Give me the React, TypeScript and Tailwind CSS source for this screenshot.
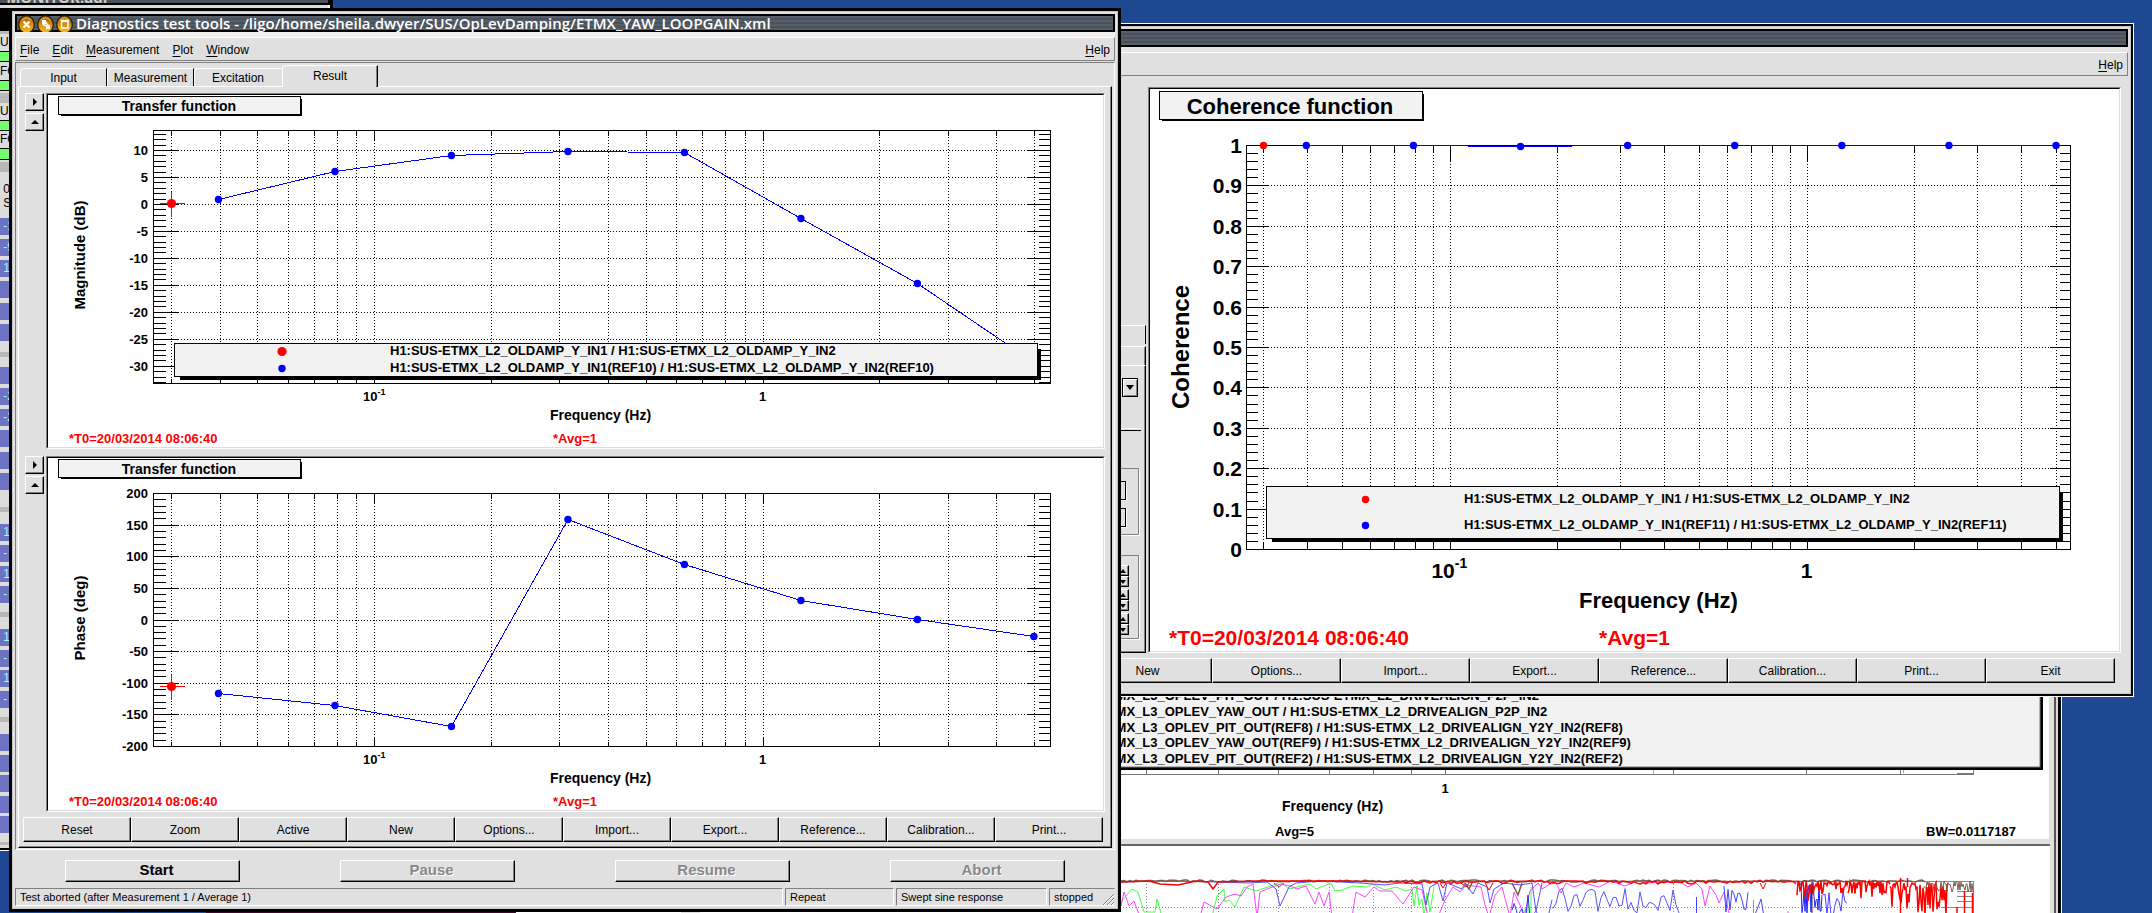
import type { ReactNode } from "react";

const DECADES = [-2, -1, 0];
const TONE_PAIR = "H1:SUS-ETMX_L2_OLDAMP_Y_IN1";
const TONE_PAIR_B = "H1:SUS-ETMX_L2_OLDAMP_Y_IN2";
/** Swept sine frequencies, log spaced up to 5 Hz */
const FREQS = [7, 6, 5, 4, 3, 2, 1, 0].map((k) => 5 * 10 ** (-0.3 * k));

type ChartSpec = {
  label: string;
  width: number;
  height: number;
  frame: [number, number, number, number];
  /** x of 0.1 Hz and width of one decade */
  x01: number;
  decade: number;
  yMax: number;
  perUnit: number;
  yTop: number;
  majors: number[];
  minors: number[];
  xTick: number;
  xTickMajor: number;
  yTick: number;
  yTickMajor: number;
  title: string;
  titleBox: [number, number, number, number];
  titleAt: [number, number];
  titleSize: number;
  tickSize: number;
  supSize: number;
  labelDy: number;
  labelX: number;
  decadeY: number;
  supDy: number;
  yTitle: string;
  yTitleAt: [number, number];
  yTitleSize: number;
  xTitleAt: [number, number];
  xTitleSize: number;
  footY: number;
  footX: [number, number];
  footSize: number;
  points: number[];
  red: [number, number];
  redRadius: number;
  redCross: boolean;
  legend?: {
    box: [number, number, number, number];
    shadow: [number, number, number, number];
    markerX: number;
    markerY: [number, number];
    textX: number;
    textY: [number, number];
    ref: string;
    redRadius: number;
  };
};

function range(from: number, to: number, step: number) {
  const n = Math.round((to - from) / step);
  return Array.from({ length: n + 1 }, (_, i) => from + i * step);
}

function Chart({ c }: { c: ChartSpec }) {
  const [l, t, r, b] = c.frame;
  const px = (f: number) => c.x01 + (Math.log10(f) + 1) * c.decade;
  const py = (v: number) => Math.round(c.yTop + (c.yMax - v) * c.perUnit) + 0.5;
  const xs = DECADES.flatMap((d) => range(1, 9, 1).map((m) => ({ f: m * 10 ** d, major: m === 1 })))
    .map((k) => ({ ...k, x: Math.round(px(k.f)) + 0.5 }))
    .filter((k) => k.x > l && k.x < r);
  const lg = c.legend;
  return (
    <svg
      role="img"
      aria-label={c.label}
      viewBox={`0 0 ${c.width} ${c.height}`}
      className="block h-full w-full bg-white font-['Liberation_Sans',Arial,sans-serif] font-bold"
    >
      <g shapeRendering="crispEdges" stroke="#000" fill="none">
        {xs.map((k) => (
          <g key={k.x}>
            <line x1={k.x} x2={k.x} y1={Math.ceil(t)} y2={Math.floor(b)} strokeDasharray="1 2" />
            <line x1={k.x} x2={k.x} y1={t} y2={t + (k.major ? c.xTickMajor : c.xTick)} />
            <line x1={k.x} x2={k.x} y1={b} y2={b - (k.major ? c.xTickMajor : c.xTick)} />
          </g>
        ))}
        {c.majors.map((v) => (
          <g key={v}>
            <line x1={Math.ceil(l)} x2={Math.floor(r)} y1={py(v)} y2={py(v)} strokeDasharray="1 2" />
            <line x1={l} x2={l + c.yTickMajor} y1={py(v)} y2={py(v)} />
            <line x1={r} x2={r - c.yTickMajor} y1={py(v)} y2={py(v)} />
          </g>
        ))}
        {c.minors.map((v) => (
          <g key={v}>
            <line x1={l} x2={l + c.yTick} y1={py(v)} y2={py(v)} />
            <line x1={r} x2={r - c.yTick} y1={py(v)} y2={py(v)} />
          </g>
        ))}
        <rect x={l} y={t} width={r - l} height={b - t} />
      </g>
      <g fontSize={c.tickSize}>
        {c.majors.map((v) => (
          <text key={v} x={c.labelX} y={py(v) + c.labelDy} textAnchor="end">
            {Number(v.toFixed(1))}
          </text>
        ))}
        <text x={px(0.1) + c.tickSize * 0.25} y={c.decadeY} textAnchor="end">
          10
        </text>
        <text x={px(0.1) + c.tickSize * 0.25} y={c.decadeY - c.supDy} fontSize={c.supSize}>
          -1
        </text>
        <text x={px(1)} y={c.decadeY} textAnchor="middle">
          1
        </text>
      </g>
      <g shapeRendering="crispEdges">
        <polyline
          points={FREQS.map((f, i) => `${px(f)},${c.points[i]}`).join(" ")}
          fill="none"
          stroke="#00f"
        />
      </g>
      {FREQS.map((f, i) => (
        <circle key={f} cx={px(f)} cy={c.points[i]} r="3.7" fill="#00f" />
      ))}
      <circle cx={c.red[0]} cy={c.red[1]} r={c.redRadius} fill="#f00" />
      {c.redCross && (
        <path
          d={`M${c.red[0] - 12} ${c.red[1]}h25M${c.red[0]} ${c.red[1] - 12}v25`}
          stroke="#f00"
          shapeRendering="crispEdges"
        />
      )}
      {lg && (
        <g>
          <rect x={lg.shadow[0]} y={lg.shadow[1]} width={lg.shadow[2] - lg.shadow[0]} height={lg.shadow[3] - lg.shadow[1]} />
          <rect
            x={lg.box[0]}
            y={lg.box[1]}
            width={lg.box[2] - lg.box[0]}
            height={lg.box[3] - lg.box[1]}
            fill="#f2f2f2"
            stroke="#000"
          />
          <circle cx={lg.markerX} cy={lg.markerY[0]} r={lg.redRadius} fill="#f00" />
          <circle cx={lg.markerX} cy={lg.markerY[1]} r="3.7" fill="#00f" />
          <text x={lg.textX} y={lg.textY[0]} fontSize="13">
            {`${TONE_PAIR} / ${TONE_PAIR_B}`}
          </text>
          <text x={lg.textX} y={lg.textY[1]} fontSize="13">
            {`${TONE_PAIR}(${lg.ref}) / ${TONE_PAIR_B}(${lg.ref})`}
          </text>
        </g>
      )}
      <g shapeRendering="crispEdges">
        <rect
          x={c.titleBox[0] + 3}
          y={c.titleBox[1] + 3}
          width={c.titleBox[2] - c.titleBox[0] - 1}
          height={c.titleBox[3] - c.titleBox[1] - 1}
        />
        <rect
          x={c.titleBox[0] + 0.5}
          y={c.titleBox[1] + 0.5}
          width={c.titleBox[2] - c.titleBox[0]}
          height={c.titleBox[3] - c.titleBox[1]}
          fill="#f2f2f2"
          stroke="#000"
        />
      </g>
      <text x={c.titleAt[0]} y={c.titleAt[1]} fontSize={c.titleSize} textAnchor="middle">
        {c.title}
      </text>
      <text
        transform={`translate(${c.yTitleAt[0]} ${c.yTitleAt[1]}) rotate(-90)`}
        fontSize={c.yTitleSize}
        textAnchor="middle"
      >
        {c.yTitle}
      </text>
      <text x={c.xTitleAt[0]} y={c.xTitleAt[1]} fontSize={c.xTitleSize}>
        Frequency (Hz)
      </text>
      <g fill="#f00" fontSize={c.footSize}>
        <text x={c.footX[0]} y={c.footY}>
          *T0=20/03/2014 08:06:40
        </text>
        <text x={c.footX[1]} y={c.footY}>
          *Avg=1
        </text>
      </g>
    </svg>
  );
}

const small = {
  width: 1055,
  height: 352,
  frame: [105.5, 35.5, 1002.5, 288.5] as [number, number, number, number],
  x01: 326.2,
  decade: 388.3,
  xTick: 5,
  xTickMajor: 10,
  yTick: 12,
  yTickMajor: 24,
  title: "Transfer function",
  titleBox: [10, 1, 252, 19] as [number, number, number, number],
  titleAt: [131, 16] as [number, number],
  titleSize: 14,
  tickSize: 13,
  supSize: 9,
  labelDy: 4,
  labelX: 100,
  decadeY: 306,
  supDy: 6,
  yTitleAt: [37, 160] as [number, number],
  yTitleSize: 15,
  xTitleAt: [502, 325] as [number, number],
  xTitleSize: 14,
  footY: 348,
  footX: [21, 505] as [number, number],
  footSize: 13,
  redRadius: 4.6,
  redCross: true,
};

const magnitude: ChartSpec = {
  ...small,
  label: "Transfer function magnitude",
  yMax: 10,
  yTop: 55,
  perUnit: 5.393,
  majors: range(-30, 10, 5),
  minors: range(-33, 13, 1),
  yTitle: "Magnitude (dB)",
  points: [104.5, 76.5, 60.5, 56.5, 57.5, 123.5, 188.5, 267.5],
  red: [123.5, 108.5],
  legend: {
    box: [126.5, 248.5, 989.5, 281.5],
    shadow: [132, 254, 993, 285],
    markerX: 234,
    markerY: [256.5, 273.5],
    textX: 342,
    textY: [260, 277],
    ref: "REF10",
    redRadius: 4.6,
  },
};

const phase: ChartSpec = {
  ...small,
  label: "Transfer function phase",
  yMax: 200,
  yTop: 35,
  perUnit: 0.6325,
  majors: range(-200, 200, 50),
  minors: range(-190, 190, 10),
  yTitle: "Phase (deg)",
  points: [235.5, 247.5, 268.5, 61.5, 106.5, 142.5, 161.5, 178.5],
  red: [123.5, 228.5],
};

const coherence: ChartSpec = {
  label: "Coherence function",
  width: 969,
  height: 562,
  frame: [96.5, 56.5, 920.5, 460.5],
  x01: 299.5,
  decade: 357,
  yMax: 1,
  yTop: 56,
  perUnit: 404,
  majors: range(0, 1, 0.1),
  minors: range(0.02, 0.98, 0.02),
  xTick: 7,
  xTickMajor: 15,
  yTick: 11,
  yTickMajor: 21,
  title: "Coherence function",
  titleBox: [9, 2, 272, 30],
  titleAt: [140, 25],
  titleSize: 22,
  tickSize: 21,
  supSize: 14,
  labelDy: 7,
  labelX: 92,
  decadeY: 489,
  supDy: 10,
  yTitle: "Coherence",
  yTitleAt: [39, 258],
  yTitleSize: 24,
  xTitleAt: [429, 519],
  xTitleSize: 22,
  footY: 556,
  footX: [19, 449],
  footSize: 21,
  points: [56.5, 56.5, 57.5, 56.5, 56.5, 56.5, 56.5, 56.5],
  red: [113.5, 56.5],
  redRadius: 3.7,
  redCross: false,
  legend: {
    box: [116.5, 397.5, 909.5, 449.5],
    shadow: [122, 403, 913, 453],
    markerX: 215.5,
    markerY: [410.5, 436.5],
    textX: 314,
    textY: [414, 440],
    ref: "REF11",
    redRadius: 3.7,
  },
};

/* ---------- window chrome ---------- */

function TitleBar({ children }: { children?: ReactNode }) {
  return (
    <div className="flex h-[18px] shrink-0 items-center border-2 border-black bg-[repeating-linear-gradient(#565f69_0_2px,#49515b_2px_4px)]">
      {children}
    </div>
  );
}

function OrbButton({ label, children }: { label: string; children: ReactNode }) {
  return (
    <button aria-label={label} className="h-[19px] w-[17px]">
      <svg viewBox="0 0 17 19" className="block h-full w-full">
        <defs>
          <linearGradient id={`orb-${label}`} x1="0" y1="0" x2="0" y2="1">
            <stop offset="0" stopColor="#9a5a00" />
            <stop offset=".5" stopColor="#d98e08" />
            <stop offset="1" stopColor="#ffc020" />
          </linearGradient>
        </defs>
        <ellipse cx="8.5" cy="9.5" rx="7.8" ry="8.8" fill={`url(#orb-${label})`} stroke="#2a1c00" strokeWidth="1.2" />
        <path d="M3.5 5.5Q8.5 0 13.5 5.5" fill="none" stroke="#e8b860" />
        {children}
      </svg>
    </button>
  );
}

function MenuItem({ text }: { text: string }) {
  return (
    <button className="text-[12px] leading-4">
      <span className="underline underline-offset-2">{text[0]}</span>
      {text.slice(1)}
    </button>
  );
}

function MenuBar({ items }: { items: string[] }) {
  return (
    <nav className="flex h-6 shrink-0 items-center justify-between border border-t-white border-r-[#808080] border-b-[#808080] border-l-white px-1 pt-[2px]">
      <div className="flex gap-[13px]">
        {items.map((i) => (
          <MenuItem key={i} text={i} />
        ))}
      </div>
      <MenuItem text="Help" />
    </nav>
  );
}

function PushButton({ children, strong, disabled }: { children: ReactNode; strong?: boolean; disabled?: boolean }) {
  return (
    <button
      disabled={disabled}
      className={`flex min-w-0 flex-1 items-center justify-center border border-t-white border-r-black border-b-black border-l-white bg-[#e0e0e0] shadow-[inset_-1px_-1px_0_#808080] ${
        strong ? "h-[22px] pb-[2px] pl-2 text-[15px] leading-4 font-bold" : "h-[25px] text-[12px] leading-4"
      } ${disabled ? "text-[#888] [text-shadow:1px_1px_0_#fff]" : "text-black"}`}
    >
      {children}
    </button>
  );
}

function ArrowButton({ dir }: { dir: "right" | "up" }) {
  return (
    <button
      aria-label={dir === "right" ? "Expand options" : "Collapse options"}
      className="flex h-[18px] w-[19px] items-center justify-center border border-t-white border-r-black border-b-black border-l-white shadow-[inset_-1px_-1px_0_#808080]"
    >
      <svg viewBox="0 0 8 8" className="h-2 w-2">
        <path d={dir === "right" ? "M2 0v8l4-4z" : "M0 6h8L4 2z"} />
      </svg>
    </button>
  );
}

function Canvas({ children }: { children: ReactNode }) {
  return (
    <div className="min-h-0 min-w-0 flex-1 border border-t-[#808080] border-r-white border-b-white border-l-[#808080]">
      <div className="h-full overflow-hidden border border-t-black border-r-[#dcdcdc] border-b-[#dcdcdc] border-l-black bg-white">
        {children}
      </div>
    </div>
  );
}

function ChartRow({ c }: { c: ChartSpec }) {
  return (
    <div className="flex min-h-0 flex-1 gap-[2px] px-[6px]">
      <div className="flex flex-col gap-[2px]">
        <ArrowButton dir="right" />
        <ArrowButton dir="up" />
      </div>
      <Canvas>
        <Chart c={c} />
      </Canvas>
    </div>
  );
}

const TABS = [
  { name: "Input", cls: "h-[18px] w-[87px] border-r-black" },
  { name: "Measurement", cls: "h-[18px] w-[87px] border-r-black" },
  { name: "Excitation", cls: "h-[18px] w-[88px] border-r-transparent" },
];
const PLOT_ACTIONS = ["Reset", "Zoom", "Active", "New", "Options...", "Import...", "Export...", "Reference...", "Calibration...", "Print..."];

function MainWindow() {
  return (
    <section className="absolute top-2 left-[9px] flex h-[904px] w-[1112px] flex-col border-[3px] border-black bg-[#e0e0e0] p-[3px] shadow-[inset_0_0_0_1px_#c8c8c8]">
      <TitleBar>
        <div className="flex gap-[2px] pt-[3px] pl-px">
          <OrbButton label="Close">
            <path d="M5.5 6.5l6 6M11.500 6.5l-6 6" stroke="#fff" strokeWidth="2.4" />
          </OrbButton>
          <OrbButton label="Minimize">
            <path d="M5 5h4v4H5zM9 10h4v4H9z" fill="#fff" />
            <path d="M5.5 9.5l6 2M8.5 7l3 4" stroke="#fff" strokeWidth="1.6" />
          </OrbButton>
          <OrbButton label="Maximize">
            <path d="M5.5 6h6.500v7h-6.500z" fill="none" stroke="#fff" strokeWidth="1.5" />
            <path d="M5 6h7.500" stroke="#fff" strokeWidth="2.5" />
          </OrbButton>
        </div>
        <h1 className="pl-[3px] font-['Open_Sans','Noto_Sans',sans-serif] text-[15px] leading-4 font-semibold whitespace-nowrap text-white">
          Diagnostics test tools - /ligo/home/sheila.dwyer/SUS/OpLevDamping/ETMX_YAW_LOOPGAIN.xml
        </h1>
      </TitleBar>
      <div className="h-[5px] shrink-0 bg-[#f0efee]" />
      <MenuBar items={["File", "Edit", "Measurement", "Plot", "Window"]} />
      <div className="mt-px flex min-h-0 flex-1 flex-col border border-t-[#808080] border-r-white border-b-white border-l-[#808080] px-[2px] pt-[2px] pb-px">
        <div className="flex shrink-0 items-end pl-[2px] text-[12px] leading-4" role="tablist">
          {TABS.map((t) => (
            <button key={t.name} role="tab" aria-selected="false" className={`rounded-tl-sm border-t border-r border-l border-t-white border-l-white ${t.cls}`}>
              {t.name}
            </button>
          ))}
          <button role="tab" aria-selected="true" className="z-10 -mb-px h-[22px] w-24 rounded-tl-sm border-t border-r border-l border-t-white border-r-black border-l-white bg-[#e0e0e0] pb-[2px] shadow-[inset_-1px_0_0_#808080]">
            Result
          </button>
        </div>
        <div className="flex min-h-0 flex-1 flex-col border border-t-white border-r-black border-b-black border-l-white pt-[6px] pb-[5px] shadow-[inset_-1px_-1px_0_#808080]">
          <div className="flex min-h-0 flex-1 flex-col gap-[7px]">
            <ChartRow c={magnitude} />
            <ChartRow c={phase} />
          </div>
          <div className="mt-[5px] flex pr-2 pl-1">
            {PLOT_ACTIONS.map((a) => (
              <PushButton key={a}>{a}</PushButton>
            ))}
          </div>
        </div>
      </div>
      <div className="grid shrink-0 grid-cols-4 pt-[10px] pb-[6px]">
        {["Start", "Pause", "Resume", "Abort"].map((a) => (
          <div key={a} className="flex px-[50px]">
            <PushButton strong disabled={a !== "Start"}>
              {a}
            </PushButton>
          </div>
        ))}
      </div>
      <footer className="flex h-[18px] shrink-0 gap-[2px] text-[11px] leading-4">
        <span className="flex-1 border border-t-[#808080] border-r-white border-b-white border-l-[#808080] pl-1">
          Test aborted (after Measurement 1 / Average 1)
        </span>
        <span className="w-[109px] border border-t-[#808080] border-r-white border-b-white border-l-[#808080] pl-1">Repeat</span>
        <span className="w-[151px] border border-t-[#808080] border-r-white border-b-white border-l-[#808080] pl-1">Swept sine response</span>
        <span className="flex w-[66px] items-end justify-between border border-t-[#808080] border-r-transparent border-b-white border-l-[#808080] pl-1">
          stopped
          <svg viewBox="0 0 12 12" className="h-3 w-3" stroke="#808080">
            <path d="M1 12L12 1M5 12l7-7M9 12l3-3" />
            <path d="M2 12L12 2M6 12l6-6M10 12l2-2" stroke="#fff" />
          </svg>
        </span>
      </footer>
    </section>
  );
}

/* ---------- coherence window ---------- */

function SpinPair({ n }: { n: number }) {
  return (
    <div className="flex w-6 flex-col">
      <button aria-label={`Increase ${n}`} className="flex h-[11px] items-center justify-end border border-l-0 border-t-white border-r-black border-b-black pr-[2px] shadow-[inset_-1px_-1px_0_#808080]">
        <svg viewBox="0 0 6 4" className="h-1 w-[6px]">
          <path d="M0 4h6L3 0z" />
        </svg>
      </button>
      <button aria-label={`Decrease ${n}`} className="flex h-[11px] items-center justify-end border border-l-0 border-t-white border-r-black border-b-black pr-[2px] shadow-[inset_-1px_-1px_0_#808080]">
        <svg viewBox="0 0 6 4" className="h-1 w-[6px]">
          <path d="M0 0h6L3 4z" />
        </svg>
      </button>
    </div>
  );
}

function OptionsPane() {
  return (
    <div className="flex w-[459px] shrink-0 flex-col pt-[238px]">
      <div className="h-[19px] border-t border-r border-t-white border-r-black" />
      <div className="mt-[2px] h-[19px] border-t border-r border-t-white border-r-black shadow-[inset_-1px_0_0_#808080]" />
      <div className="flex min-h-0 flex-1 flex-col items-end border-t border-r border-b border-t-white border-r-black border-b-black pr-1 shadow-[inset_-1px_-1px_0_#808080]">
        <button aria-label="Open list" className="mt-3 mr-[3px] flex h-[19px] w-4 items-center justify-center border border-black shadow-[inset_1px_1px_0_#fff,inset_-1px_-1px_0_#808080]">
          <svg viewBox="0 0 8 5" className="h-[5px] w-2">
            <path d="M0 0h8L4 5z" />
          </svg>
        </button>
        <hr className="mt-[31px] h-[3px] w-full border-t border-b border-t-white border-b-black" />
        <div className="mt-[37px] mr-[2px] flex h-[67px] w-24 flex-col gap-2 border border-[#808080] py-3 pr-3 shadow-[1px_1px_0_#fff]">
          <input aria-label="Range minimum" className="h-[19px] w-full border border-black bg-[#e0e0e0] shadow-[1px_1px_0_#fff]" />
          <input aria-label="Range maximum" className="h-[19px] w-full border border-black bg-[#e0e0e0] shadow-[1px_1px_0_#fff]" />
        </div>
        <div className="mt-5 mr-[2px] flex h-[84px] w-24 flex-col items-end gap-[2px] border border-[#808080] pt-[9px] pr-[9px] shadow-[1px_1px_0_#fff]">
          {[1, 2, 3].map((n) => (
            <SpinPair key={n} n={n} />
          ))}
        </div>
      </div>
    </div>
  );
}

function CoherenceWindow() {
  return (
    <section className="absolute top-[23px] left-[681px] h-[674px] w-[1453px] border border-white bg-black p-[2px]">
      <div className="flex h-full flex-col bg-[#e0e0e0] p-[3px] shadow-[inset_0_0_0_1px_#c8c8c8]">
        <TitleBar />
        <div className="h-[5px] shrink-0 bg-[#e6e4e4]" />
        <MenuBar items={[]} />
        <div className="flex min-h-0 flex-1 gap-[2px] pt-[11px] pr-[7px]">
          <OptionsPane />
          <Canvas>
            <Chart c={coherence} />
          </Canvas>
        </div>
        <div className="mt-[5px] mb-2 flex pr-[13px] pl-[9px]">
          {[...PLOT_ACTIONS, "Exit"].map((a) => (
            <PushButton key={a}>{a}</PushButton>
          ))}
        </div>
      </div>
    </section>
  );
}

/* ---------- background spectrum window ---------- */

const LEGEND_ROWS = [
  "H1:SUS-ETMX_L3_OPLEV_PIT_OUT / H1:SUS-ETMX_L2_DRIVEALIGN_P2P_IN2",
  "H1:SUS-ETMX_L3_OPLEV_YAW_OUT / H1:SUS-ETMX_L2_DRIVEALIGN_P2P_IN2",
  "H1:SUS-ETMX_L3_OPLEV_PIT_OUT(REF8) / H1:SUS-ETMX_L2_DRIVEALIGN_Y2Y_IN2(REF8)",
  "H1:SUS-ETMX_L3_OPLEV_YAW_OUT(REF9) / H1:SUS-ETMX_L2_DRIVEALIGN_Y2Y_IN2(REF9)",
  "H1:SUS-ETMX_L3_OPLEV_PIT_OUT(REF2) / H1:SUS-ETMX_L2_DRIVEALIGN_Y2Y_IN2(REF2)",
];
const LEGEND_Y = [100, 116, 132, 147, 163];
const GRID_X = [446.5, 518.5, 578.5, 629.5, 673.5, 711.5, 745.5, 973.5, 1106.5, 1200.5];

/** Random trace hanging down from the top of the plot; depth grows with amp, spiky with high power. */
function trace(seed: number, from: number, to: number, step: number, amp: (x: number) => number, power: number, top = 36) {
  let s = seed;
  const next = () => {
    s = (s * 1103515245 + 12345) % 2147483648;
    return s / 2147483648;
  };
  return range(from, to, step)
    .map((x) => `${x},${(top + next() ** power * amp(x)).toFixed(1)}`)
    .join(" ");
}

const GREEN = "421,57 432,44 438,47 444,67 455,67 457,54 462,72 512,72 517,51 524,44 525,57 529,55 535,62 544,42 556,46 571,41 580,37 589,44 610,39 616,44 631,38 635,46 642,45 653,41 667,42 672,39 685,45 696,42 706,46 712,44 714,61 717,41 719,60 722,54 724,72 727,48 730,67 734,42";
const MAGENTA_A = "421,61 424,47 429,61 434,56 440,72 500,72 504,57 517,64 526,52 535,49 541,51 547,42 553,39 557,72 560,47 567,44 581,39 590,41 597,44 606,41 615,59 619,47 624,61 629,47 632,72 652,72 656,47 665,52 674,42 680,46 692,46 703,59 714,42 722,45 728,72";
const MAGENTA_B = "738,72 745,55 753,42 760,47 766,40 781,42 785,60 789,72 795,50 802,42 810,72 814,47 820,60 824,72 830,46 838,38 842,44 850,39 856,38 861,48 866,38 874,42 884,38 899,42 911,36 925,41 937,36 950,38 960,37 980,37 988,42 996,38 1002,44 1005,61 1010,41 1016,50 1019,58 1024,47 1030,72";
const BLUE = "421,37 460,36 520,37 548,38 567,37 576,44 580,61 589,42 596,38 620,36 660,38 685,40 700,38 722,39 726,60 730,42 738,38 743,56 747,38 762,44 765,38 773,49 778,38 787,42 790,58 794,44 804,38 820,40 832,38 836,66 842,38";

function SpectrumWindow() {
  return (
    <section className="absolute top-[600px] left-[681px] h-[313px] w-[1381px] overflow-hidden border-r border-white">
      <div className="h-full border-r-[3px] border-black">
        <div className="h-full border-r-2 border-[#d8d8d8]">
          <div className="flex h-full flex-col border-r-2 border-[#555] bg-[#e0e0e0] pl-[19px] pr-1">
            <svg viewBox="0 0 1349 239" className="block h-[239px] w-[1349px] bg-white font-['Liberation_Sans',Arial,sans-serif] font-bold">
              <rect x="0" y="2" width="1343" height="168" />
              <rect x="0" y="0" width="1340" height="167" fill="#f2f2f2" stroke="#777" />
              {LEGEND_ROWS.map((row, i) => (
                <text key={row} x="347" y={LEGEND_Y[i]} fontSize="13">
                  {row}
                </text>
              ))}
              <g shapeRendering="crispEdges" stroke="#777">
                <path d="M0 174.500H1273.500V170M1257 173.500h16" fill="none" />
                {GRID_X.map((x) => (
                  <line key={x} x1={x} x2={x} y1="170" y2="174" />
                ))}
                <line x1="953.5" x2="953.5" y1="170" y2="174" stroke="#3f3" />
                <line x1="1203.500" x2="1203.500" y1="170" y2="173" stroke="#f5f" />
              </g>
              <text x="745" y="193" fontSize="13" textAnchor="middle">
                1
              </text>
              <text x="582" y="211" fontSize="14">
                Frequency (Hz)
              </text>
              <text x="575" y="236" fontSize="13">
                Avg=5
              </text>
              <text x="1226" y="236" fontSize="13">
                BW=0.0117187
              </text>
            </svg>
            <div className="mt-[5px] flex-1 overflow-hidden border-t-2 border-[#666] bg-white">
              <svg viewBox="0 1 1349 67" className="block h-[67px] w-[1349px]" fill="none">
                <g shapeRendering="crispEdges" stroke="#888">
                  <path d="M0 36.500H1273.500V72" />
                  <path d="M0 62.500H1273" strokeDasharray="1 2" />
                  {GRID_X.map((x) => (
                    <line key={x} x1={x} x2={x} y1="36" y2="72" strokeDasharray="1 2" />
                  ))}
                  <path d="M1257 46.500h16M1257 51.500h16M1257 56.500h16M1241 62.500h32" />
                </g>
                <polyline points={GREEN} stroke="#4f4" />
                <path d="M825 72V62M828 72V50M831 42V72" stroke="#4f4" />
                <polyline points={MAGENTA_A} stroke="#f4f" />
                <polyline points={MAGENTA_B} stroke="#f4f" />
                <path d="M1053.500 55V72M1088 66v6" stroke="#f4f" />
                <polyline points={BLUE} stroke="#55f" />
                <polyline points={trace(7, 812, 830, 2, () => 30, 0.5, 42)} stroke="#33f" />
                <polyline points={trace(19, 832, 852, 4, () => 22, 1, 54)} stroke="#55f" />
                <polyline points={trace(23, 853, 978, 3, () => 26, 1, 42)} stroke="#55f" />
                <path d="M996.500 52V72" stroke="#44f" />
                <polyline points={trace(41, 1024, 1048, 2, () => 28, 1, 39)} stroke="#44f" />
                <polyline points={trace(43, 1100, 1122, 1, () => 32, 1, 37)} stroke="#22f" />
                <polyline points={trace(47, 1123, 1146, 2, () => 26, 1, 46)} stroke="#44f" />
                <path d="M1054 72l4-10 3-8 3 18" stroke="#44f" />
                <polyline points={trace(5, 421, 1224, 3, () => 2, 1, 35)} stroke="#7a6050" strokeWidth="1.500" />
                <path d="M765 38l4 6 3-6M812 38l6 12 4-12" stroke="#7a6050" strokeWidth="1.500" />
                <path d="M574 38l5 4 5-4" stroke="#7a6050" />
                <polyline points="421,37 449,36 460,39 478,40 496,36 508,37 513,44 518,37 560,36 640,36 700,37" stroke="#f00" strokeWidth="1.500" />
                <polyline points={trace(11, 700, 1097, 3, () => 3, 2, 36)} stroke="#f00" strokeWidth="1.500" />
                <path d="M740 38l3 5 3-5M761 38l5 4 3-4M785 38l4 7 4-7M1060 38l3 6 3-6" stroke="#f00" />
                <polyline points={trace(97, 1097, 1148, 1, (x) => (x < 1110 ? 20 : 14), 2)} stroke="#f00" strokeWidth="1.500" />
                <polyline points={trace(31, 1148, 1190, 1, (x) => 14 + (x - 1148) / 3, 2)} stroke="#f00" strokeWidth="1.500" />
                <polyline points={trace(61, 1190, 1248, 1, (x) => 24 + (x - 1190) / 3, 1.6, 37)} stroke="#f00" strokeWidth="1.500" />
                <path d="M1200.500 33V72M1207.500 33V42M1257 72V62M1264.500 46V72M1272.500 48V72" stroke="#f00" strokeWidth="1.500" />
                <polyline points={trace(71, 1224, 1273, 1, () => 11, 1)} stroke="#7a6050" />
                <path d="M1112 40V72" stroke="#503030" />
              </svg>
            </div>
          </div>
        </div>
      </div>
    </section>
  );
}

/* ---------- sliver of the monitor screen at the left edge ---------- */

const G = "bg-[#dcdcdc] text-black";
const D = "bg-[#b8b8b8]";
const K = "bg-black";
const L = "bg-[#73ff6b]";
const V = "bg-[#6b73c2] text-[#9ff]";
const STRIP: [number, string, string?][] = [
  [23, K], [3, D], [17, G, "UT"], [1, K], [9, L], [1, K], [18, G, "FO"], [1, K], [9, L], [1, K], [2, G], [10, D], [17, G, "UT"],
  [1, K], [9, L], [1, K], [17, G, "FO"], [1, K], [10, L], [1, K], [2, G], [10, D], [10, G], [14, G, " 0"], [14, G, " S"], [8, G],
  [17, V, " -1"], [4, G], [17, V, " -9"], [4, G], [17, V, " 1"], [4, G], [17, V], [5, G], [17, V], [4, G], [17, V], [11, G], [5, D], [10, G],
  [17, V], [4, G], [17, V, " -2"], [4, G], [17, V, " -2"], [4, G], [17, V], [5, G], [17, V], [4, G], [17, V], [17, G], [5, D], [12, G],
  [17, V, " 1"], [4, G], [17, V, " -"], [4, G], [16, V, " 1"], [4, G], [17, V, " -"], [9, G], [5, D], [12, G],
  [17, V, " 1"], [4, G], [17, V, " -"], [3, G], [17, V, " 1"], [4, G], [17, V, " -"], [9, G], [5, D], [12, G],
  [17, V], [4, G], [17, V], [3, G], [17, V], [4, G], [17, V], [3, G], [17, V], [9, G], [3, D], [3, G], [2, K],
];

function MonitorStrip() {
  return (
    <aside className="absolute top-2 left-0 flex w-[9px] flex-col overflow-hidden border-b border-white text-[12px] whitespace-pre">
      {STRIP.map(([h, cls, text], i) => (
        <div key={i} className={`shrink-0 overflow-hidden ${cls}`} style={{ height: h, lineHeight: `${h}px` }}>
          {text}
        </div>
      ))}
    </aside>
  );
}

export default function App() {
  return (
    <main className="relative h-screen overflow-hidden bg-[#1e4891] font-['Liberation_Sans',Arial,sans-serif] text-black">
      <div className="absolute top-0 left-0 flex h-2 w-[333px] flex-col border-r-[3px] border-black">
        <div className="h-[3px] overflow-hidden border-r-2 border-black bg-[#49515b]">
          <div className="-mt-[11px] font-['Open_Sans','Noto_Sans',sans-serif] text-[15px] leading-4 font-bold text-[#ccc]">_MONITOR.adl</div>
        </div>
        <div className="h-[2px] bg-black" />
        <div className="flex-1 border-r-2 border-white bg-[#dcdcdc]" />
      </div>
      <MonitorStrip />
      <div className="absolute bottom-0 left-[206px] h-2 w-[310px] bg-[#3a0a28]" />
      <div className="absolute bottom-0 left-[516px] h-2 w-[610px] bg-white" />
      <SpectrumWindow />
      <CoherenceWindow />
      <MainWindow />
    </main>
  );
}
